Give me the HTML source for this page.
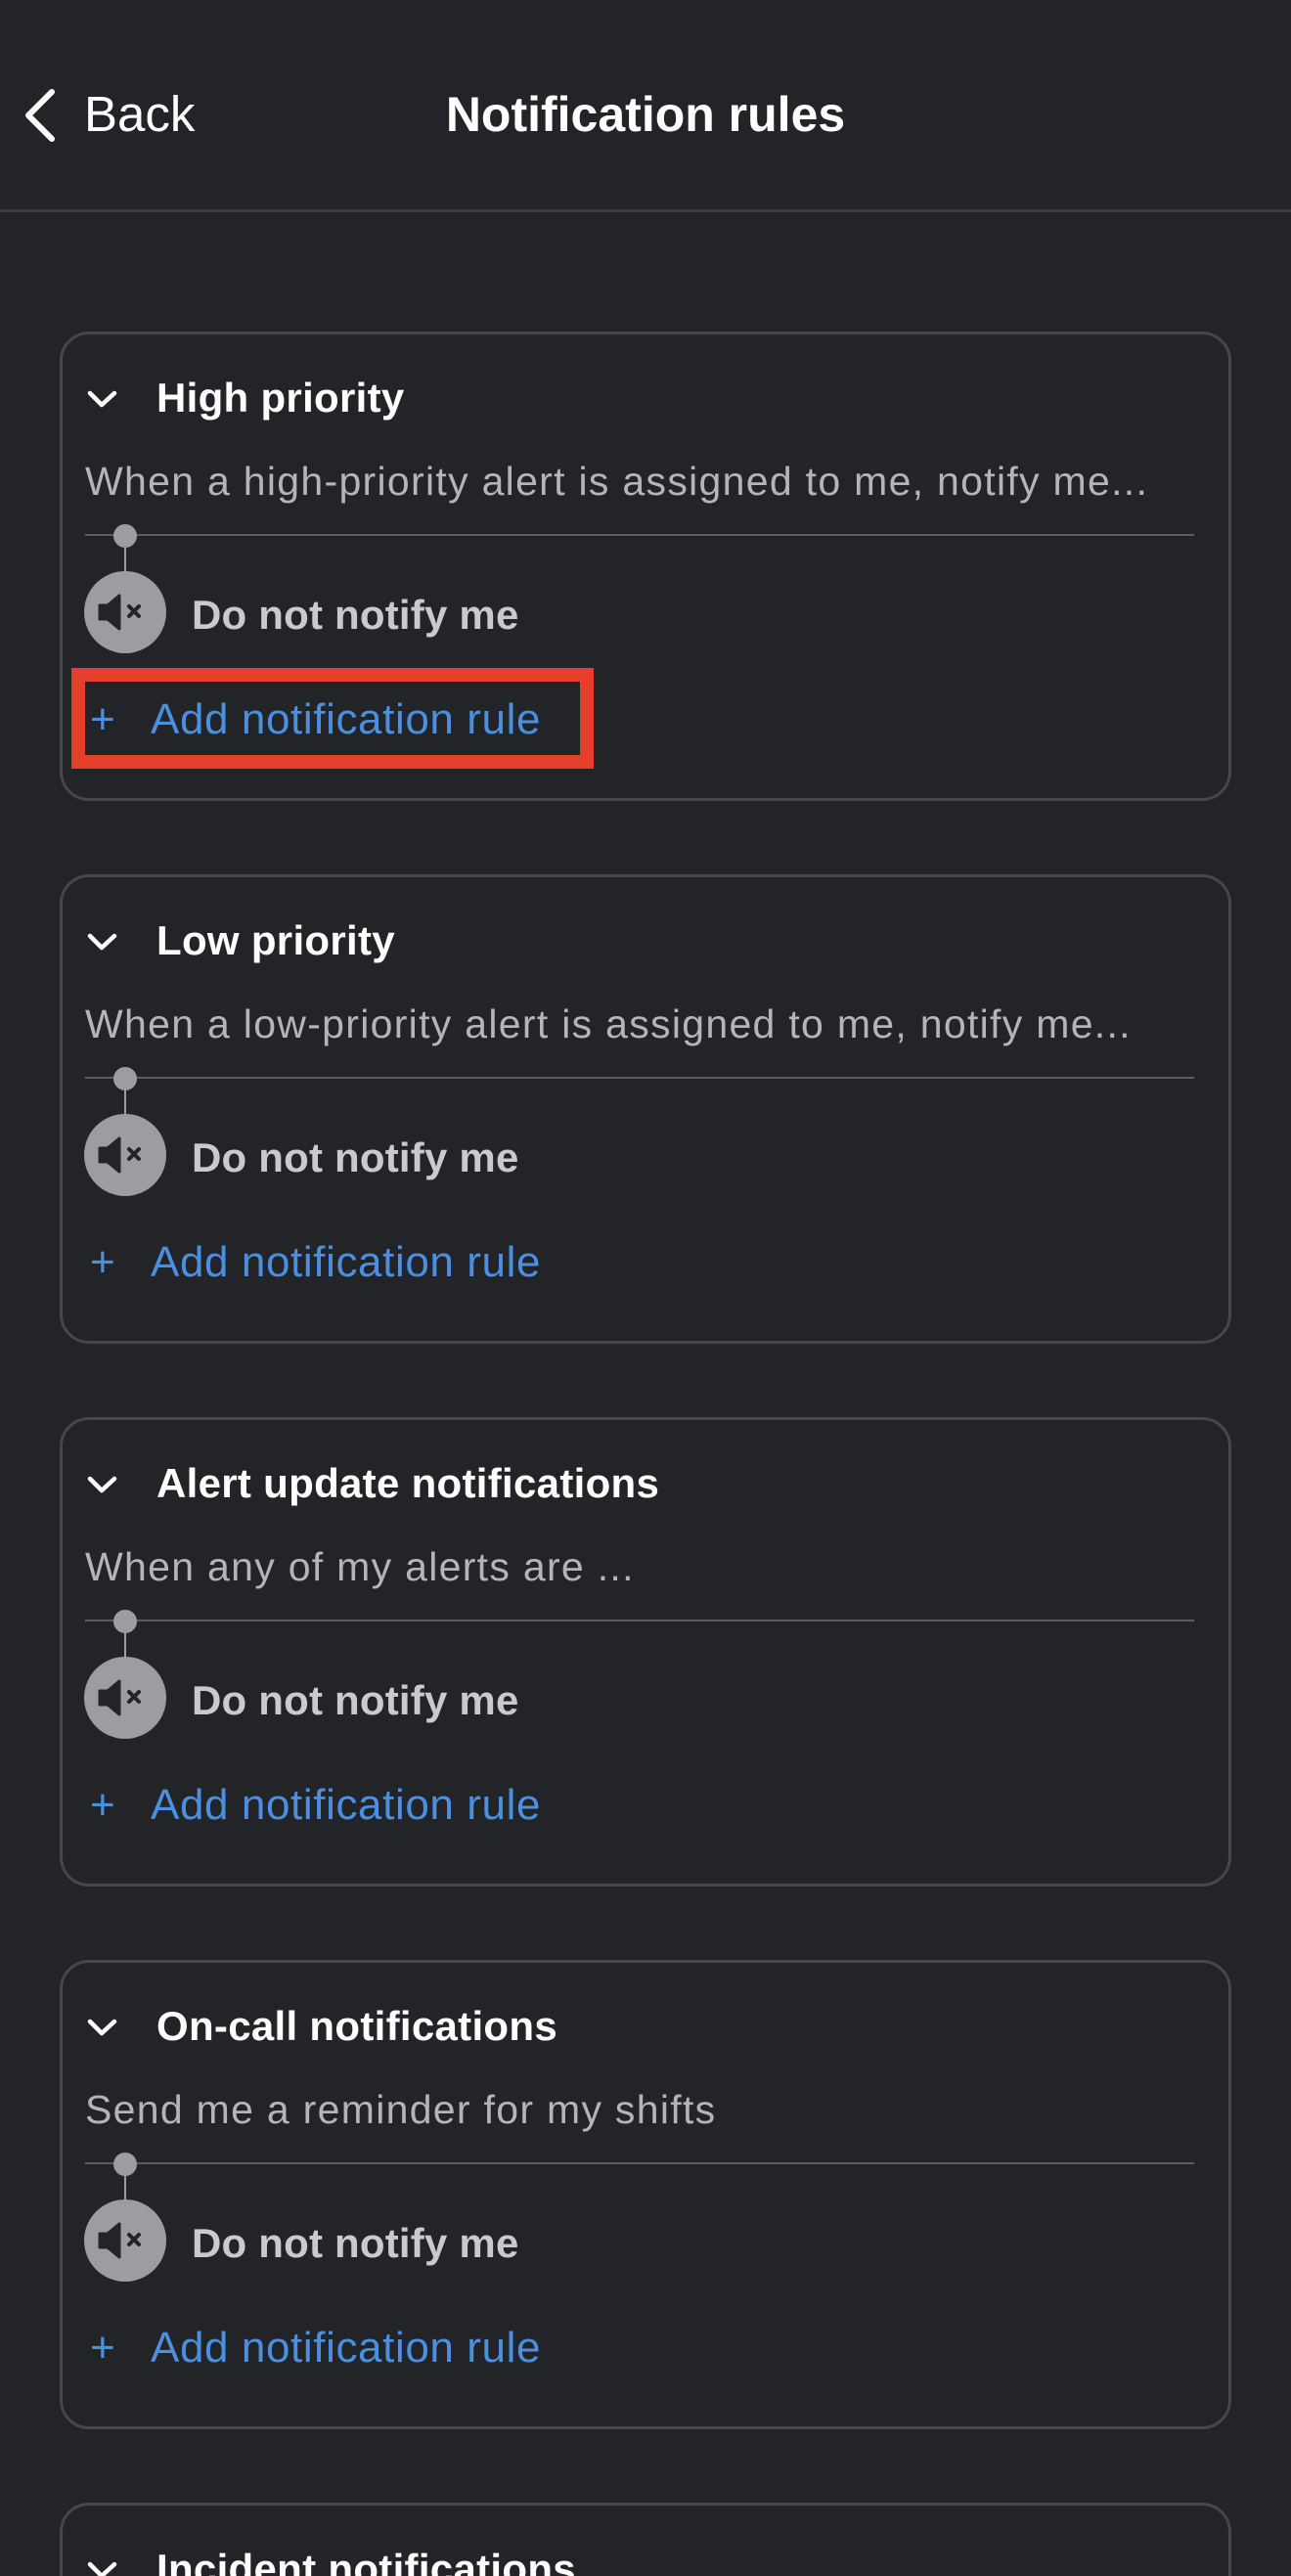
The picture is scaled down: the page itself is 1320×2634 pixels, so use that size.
<!DOCTYPE html>
<html style="height:2634px;overflow:hidden"><head><meta charset="utf-8"><style>
*{margin:0;padding:0;box-sizing:border-box}
body{width:1320px;height:2634px;background:#232428;font-family:"Liberation Sans",sans-serif;position:relative;overflow:hidden}
.a{position:absolute;white-space:nowrap;line-height:1}
.card{position:absolute;left:61px;width:1198px;height:480px;border:3px solid #46474c;border-radius:30px}
</style></head><body>
<svg class="a" style="left:0;top:0" width="80" height="200"><path d="M53 94 L29 118 L53 142" fill="none" stroke="#fff" stroke-width="6" stroke-linecap="round" stroke-linejoin="round"/></svg>
<div class="a" style="left:86px;top:91px;font-size:51px;color:#fff">Back</div>
<div class="a" style="left:0;width:1320px;text-align:center;top:92px;font-size:50px;color:#fff;font-weight:bold">Notification rules</div>
<div class="a" style="left:0;top:214px;width:1320px;height:3px;background:#3c3d41"></div>

<div id="cards"></div>
<script>
var data=[["High priority","When a high-priority alert is assigned to me, notify me..."],["Low priority","When a low-priority alert is assigned to me, notify me..."],["Alert update notifications","When any of my alerts are ..."],["On-call notifications","Send me a reminder for my shifts"],["Incident notifications",""]];
var h="";
data.forEach(function(d,i){var t=339+i*555;
h+='<div class="card" style="top:'+t+'px"></div>';
h+='<svg class="a" style="left:85px;top:'+(t+57)+'px" width="40" height="30"><path d="M7 6 L19 18 L32 6" fill="none" stroke="#fff" stroke-width="4.5" stroke-linecap="round" stroke-linejoin="round"/></svg>';
h+='<div class="a" style="left:160px;top:'+(t+47)+'px;font-size:42px;font-weight:bold;color:#fff;letter-spacing:0.3px">'+d[0]+'</div>';
h+='<div class="a" style="left:87px;top:'+(t+133)+'px;font-size:41px;letter-spacing:1.3px;color:#b4b5ba">'+d[1]+'</div>';
h+='<div class="a" style="left:87px;top:'+(t+207)+'px;width:1134px;height:2px;background:#5c5d62"></div>';
h+='<div class="a" style="left:116px;top:'+(t+197)+'px;width:24px;height:24px;border-radius:50%;background:#9c9ca1"></div>';
h+='<div class="a" style="left:127px;top:'+(t+215)+'px;width:2px;height:32px;background:#9c9ca1"></div>';
h+='<svg class="a" style="left:86px;top:'+(t+245)+'px" width="84" height="84"><circle cx="42" cy="42" r="42" fill="#9c9ca1"/><path d="M16 35 h8 l12 -10 v34 l-12 -10 h-8 z" fill="#232428" stroke="#232428" stroke-width="3" stroke-linejoin="round"/><path d="M46 36 l10 10 M56 36 l-10 10" stroke="#232428" stroke-width="4" stroke-linecap="round"/></svg>';
h+='<div class="a" style="left:196px;top:'+(t+269)+'px;font-size:42px;font-weight:bold;color:#c9cacf;letter-spacing:0.2px">Do not notify me</div>';
h+='<div class="a" style="left:92px;top:'+(t+375)+'px;font-size:44px;color:#4a8fe0">+</div>';
h+='<div class="a" style="left:154px;top:'+(t+375)+'px;font-size:44px;color:#4a8fe0;letter-spacing:0.6px">Add notification rule</div>';
});
document.getElementById("cards").innerHTML=h;
</script>
<div class="a" style="left:73px;top:683px;width:534px;height:103px;border:14px solid #e43f2a"></div>
</body></html>
